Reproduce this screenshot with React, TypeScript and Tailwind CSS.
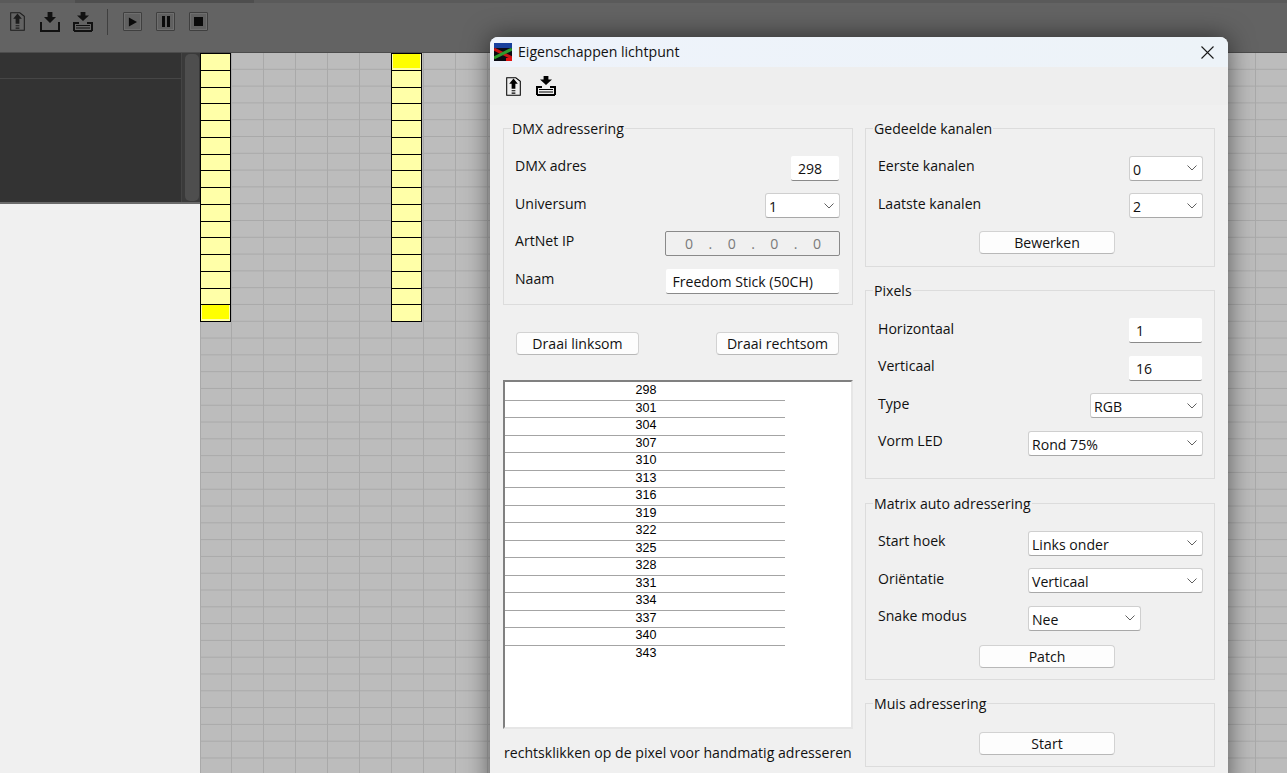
import React from "react";

const FileUpIcon = ({ className }: { className?: string }) => (
  <svg viewBox="0 0 16 20" className={className} fill="none">
    <path d="M.75.75H10.5L15.25 4.5V19.25H.75Z" stroke="currentColor" strokeWidth="1.1" />
    <path d="M8 1.5L12.6 7H10V12.5H6V7H3.4Z" fill="currentColor" />
    <path d="M6 14.5H10M6 17H10" stroke="currentColor" strokeWidth="1.2" />
  </svg>
);
const SaveIcon = ({ className }: { className?: string }) => (
  <svg viewBox="0 0 20 20" className={className} fill="none">
    <path d="M7.6 0H12.4V5H16L10 11L4 5H7.6Z" fill="currentColor" />
    <path d="M1 10V19H19V10" stroke="currentColor" strokeWidth="2" />
  </svg>
);
const SaveAsIcon = ({ className }: { className?: string }) => (
  <svg viewBox="0 0 20 20" className={className} fill="none">
    <path d="M7.6 0H12.4V3.5H16L10 9L4 3.5H7.6Z" fill="currentColor" />
    <path d="M1 19H19M1 19V11H6M19 19V11H14" stroke="currentColor" strokeWidth="2" strokeLinejoin="miter" strokeLinecap="butt" />
    <path d="M3 13.5H17M3 16H17" stroke="currentColor" strokeWidth="1" />
  </svg>
);
const MediaButton = ({ children }: { children: React.ReactNode }) => (
  <div className="w-[19px] h-[19px] border border-[#3f3f3f] bg-[#606060] rounded-[1px] flex items-center justify-center shadow-[inset_0_0_0_1px_#6e6e6e]">
    {children}
  </div>
);
const Chevron = () => (
  <svg viewBox="0 0 10 6" className="w-[10px] h-[6px] shrink-0" fill="none">
    <path d="M.5.5L5 5L9.5.5" stroke="#606060" strokeWidth="1" />
  </svg>
);
const FlagIcon = () => (
  <svg viewBox="0 0 18 18" className="w-[18px] h-[18px] shrink-0">
    <rect width="18" height="18" fill="#0a0a14" />
    <rect width="18" height="5" fill="#173f9c" />
    <path d="M0 6L18 15" stroke="#c81414" strokeWidth="3" />
    <path d="M0 15L18 6" stroke="#2e9a2e" strokeWidth="3" />
    <rect y="15" x="12" width="6" height="3" fill="#e01010" />
  </svg>
);

const Group = ({ title, className, children }: { title: string; className: string; children: React.ReactNode }) => (
  <div className={`relative border border-[#dcdcdc] ${className}`}>
    <span className="absolute left-[7px] -top-[10px] bg-[#f0f0f0] px-px leading-[19px]">{title}</span>
    {children}
  </div>
);
const Row = ({ label, children }: { label: string; children: React.ReactNode }) => (
  <div className="h-[25px] flex items-center justify-between">
    <span className="pb-[5px] leading-[19px]">{label}</span>
    {children}
  </div>
);
const Select = ({ value, w }: { value: string; w: string }) => (
  <div className={`${w} h-[25px] bg-white border border-[#cfcfcf] border-b-[#a8a8a8] rounded-[3px] flex items-center justify-between pl-[3px] pr-[5px]`}>
    <span className="pt-[2px] leading-[19px]">{value}</span>
    <Chevron />
  </div>
);
const Input = ({ value, w }: { value: string; w: string }) => (
  <div className={`${w} h-[25px] bg-white border-b border-b-[#8a8a8a] rounded-[2px] flex items-center pl-[7px]`}>
    <span className="pt-[1px] leading-[19px]">{value}</span>
  </div>
);
const Btn = ({ label, w }: { label: string; w: string }) => (
  <div className={`${w} h-[23px] bg-[#fdfdfd] border border-[#d2d2d2] border-b-[#b8b8b8] rounded-[4px] flex items-center justify-center leading-[19px]`}>
    {label}
  </div>
);

const Fixture = ({ left, lit }: { left: string; lit: number }) => (
  <div className={`absolute top-0 ${left} w-[31px] h-[269px] border-x-[1.5px] border-b-[1.5px] border-t-[1px] border-black flex flex-col bg-[#ffffa8]`}>
    {Array.from({ length: 16 }).map((_, i) => (
      <div key={i} className={`flex-1 ${i < 15 ? "border-b-[1.5px] border-black" : ""}`}>
        {i === lit && <div className="h-[calc(100%-2px)] bg-[#ffff00] mx-px" />}
      </div>
    ))}
  </div>
);

const addresses = [298, 301, 304, 307, 310, 313, 316, 319, 322, 325, 328, 331, 334, 337, 340, 343];

export default function App() {
  return (
    <div className="relative w-[1287px] h-[773px] overflow-hidden bg-[#f0f0f0] flex flex-col font-['Open_Sans','Noto_Sans',sans-serif] text-[14.1px] text-[#111]">
      <div className="h-[3px] bg-[#5a5a5a] pl-[75px] shrink-0">
        <div className="w-[179px] h-full bg-[#4e4e4e]" />
      </div>
      <div className="h-[50px] shrink-0 bg-[#636363] border-b border-[#4c4c4c] flex items-start pt-[6px] pl-[10px] text-[#111]">
        <FileUpIcon className="w-[15px] h-[19px] mt-[3px] text-[#1c1c1c]" />
        <SaveIcon className="w-[20px] h-[20px] ml-[15px] mt-[3px]" />
        <SaveAsIcon className="w-[20px] h-[20px] ml-[13px] mt-[3px]" />
        <div className="w-px h-[26px] bg-[#3f3f3f] ml-[14px]" />
        <div className="flex gap-[14px] ml-[15px] mt-[3px]">
          <MediaButton><svg viewBox="0 0 10 10" className="w-[9px] h-[10px]"><path d="M1 0L10 5L1 10Z" fill="#0a0a0a" /></svg></MediaButton>
          <MediaButton><div className="flex gap-[2px]"><div className="w-[3px] h-[11px] bg-[#0a0a0a]" /><div className="w-[3px] h-[11px] bg-[#0a0a0a]" /></div></MediaButton>
          <MediaButton><div className="w-[9px] h-[9px] bg-[#0a0a0a]" /></MediaButton>
        </div>
      </div>
      <div className="flex-1 flex min-h-0">
        <div className="w-[200px] shrink-0 flex flex-col">
          <div className="h-[151px] bg-[#333333] border-b-2 border-[#6a6a6a] flex">
            <div className="w-[181px] h-[26px] border-b border-[#464646]" />
            <div className="w-[19px] bg-[#3a3a3a] pl-[3px] pr-[1px] pt-[1px] pb-[1px] border-l border-[#444]">
              <div className="h-full bg-[#4e4e4e] rounded-[5px]" />
            </div>
          </div>
        </div>
        <div className="relative flex-1 bg-[#bcbcbc] border-l border-[#a9a9a9] bg-[linear-gradient(to_right,transparent_30px,#a9a9a9_30px,#a9a9a9_31.3px,transparent_31.3px),linear-gradient(to_bottom,transparent_15.5px,#a9a9a9_15.5px)] bg-[length:32px_16.8px]">
          <Fixture left="-left-px" lit={15} />
          <Fixture left="left-[190px]" lit={0} />
        </div>
      </div>

      <div className="absolute left-[490px] top-[37px] w-[738px] h-[760px] bg-[#f0f0f0] rounded-t-[8px] shadow-[0_0_26px_rgba(0,0,0,0.55)] flex flex-col">
        <div className="h-[30px] shrink-0 rounded-t-[8px] bg-gradient-to-r from-[#eef3fb] to-[#edf3f8] flex items-center pl-[4px] pr-[14px]">
          <FlagIcon />
          <span className="ml-[6px] flex-1 leading-[19px] pb-[2px]">Eigenschappen lichtpunt</span>
          <svg viewBox="0 0 13 13" className="w-[13px] h-[13px]" fill="none"><path d="M.5.5L12.5 12.5M12.5.5L.5 12.5" stroke="#1a1a1a" strokeWidth="1.1" /></svg>
        </div>
        <div className="h-[38px] shrink-0 bg-[#eeeeee] flex items-center pl-[16px] gap-[15px] text-black">
          <FileUpIcon className="w-[15px] h-[19px]" />
          <SaveAsIcon className="w-[20px] h-[20px]" />
        </div>
        <div className="flex gap-[12px] pl-[13px] pt-[23px]">
          <div className="w-[350px]">
            <Group title="DMX adressering" className="h-[177px] pt-[26.5px] pl-[11px] pr-[12px]">
              <div className="flex flex-col gap-[12.7px]">
                <Row label="DMX adres"><div className="pr-px"><Input value="298" w="w-[48px]" /></div></Row>
                <Row label="Universum"><Select value="1" w="w-[75px]" /></Row>
                <Row label="ArtNet IP">
                  <div className="w-[175px] h-[25px] border border-[#8a8a8a] rounded-[2px] flex items-center justify-between pl-[19px] pr-[18px] text-[#7a7a7a]">
                    <span>0</span><span>.</span><span>0</span><span>.</span><span>0</span><span>.</span><span>0</span>
                  </div>
                </Row>
                <Row label="Naam"><div className="pr-px"><Input value="Freedom Stick (50CH)" w="w-[173.5px]" /></div></Row>
              </div>
            </Group>
            <div className="flex justify-between pl-[13px] pr-[14px] mt-[27px]">
              <Btn label="Draai linksom" w="w-[123px]" />
              <Btn label="Draai rechtsom" w="w-[123px]" />
            </div>
            <div className="mt-[25px] h-[349px] bg-white border-2 border-t-[#808080] border-l-[#808080] border-r-[#e6e6e6] border-b-[#e6e6e6] pt-px font-['Liberation_Sans',sans-serif] text-[12.5px] text-black">
              <div className="w-[280px]">
                {addresses.map((a, i) => (
                  <div key={a} className={`h-[17.5px] flex items-center justify-center pl-[2px] pb-px ${i < 15 ? "border-b border-[#a4a4a4]" : ""}`}>
                    {a}
                  </div>
                ))}
              </div>
            </div>
            <div className="mt-[14px] pl-px leading-[19px] whitespace-nowrap">rechtsklikken op de pixel voor handmatig adresseren</div>
          </div>

          <div className="w-[350px]">
            <Group title="Gedeelde kanalen" className="h-[139px] pt-[26.5px] pl-[12px] pr-[11px]">
              <div className="flex flex-col gap-[12.7px]">
                <Row label="Eerste kanalen"><Select value="0" w="w-[74px]" /></Row>
                <Row label="Laatste kanalen"><Select value="2" w="w-[74px]" /></Row>
              </div>
              <div className="mt-[13px] ml-[101px]"><Btn label="Bewerken" w="w-[136px]" /></div>
            </Group>
            <Group title="Pixels" className="h-[189px] mt-[23px] pt-[27px] pl-[12px] pr-[11px]">
              <div className="flex flex-col gap-[12.5px]">
                <Row label="Horizontaal"><div className="pr-px"><Input value="1" w="w-[73px]" /></div></Row>
                <Row label="Verticaal"><div className="pr-px"><Input value="16" w="w-[73px]" /></div></Row>
                <Row label="Type"><Select value="RGB" w="w-[113px]" /></Row>
                <Row label="Vorm LED"><Select value="Rond 75%" w="w-[175px]" /></Row>
              </div>
            </Group>
            <Group title="Matrix auto adressering" className="h-[177px] mt-[24px] pt-[26.5px] pl-[12px] pr-[11px]">
              <div className="flex flex-col gap-[12.5px]">
                <Row label="Start hoek"><Select value="Links onder" w="w-[175px]" /></Row>
                <Row label="Oriëntatie"><Select value="Verticaal" w="w-[175px]" /></Row>
                <div className="h-[25px] flex items-center">
                  <span className="pb-[5px] leading-[19px] w-[150px]">Snake modus</span>
                  <Select value="Nee" w="w-[113px]" />
                </div>
              </div>
              <div className="mt-[14px] ml-[101px]"><Btn label="Patch" w="w-[136px]" /></div>
            </Group>
            <Group title="Muis adressering" className="h-[64px] mt-[23px] pt-[28px] pl-[113px]">
              <Btn label="Start" w="w-[136px]" />
            </Group>
          </div>
        </div>
      </div>
    </div>
  );
}
